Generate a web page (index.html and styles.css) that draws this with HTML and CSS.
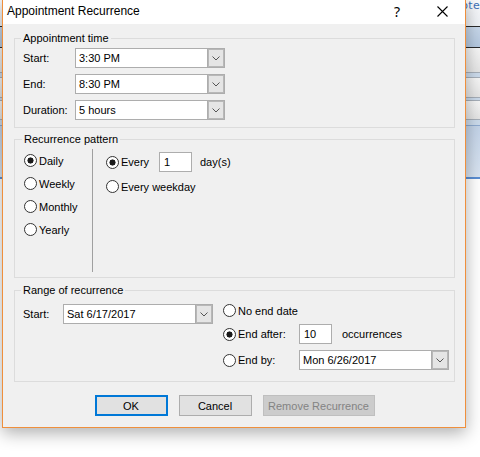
FILE: index.html
```html
<!DOCTYPE html>
<html>
<head>
<meta charset="utf-8">
<link rel="stylesheet" href="styles.css">
</head>
<body>
<div class="desk">
  <div class="app">
    <div class="app-tab"><span class="app-tab-text">ote</span></div>
    <div class="app-line dark"></div>
    <div class="app-band blue"></div>
    <div class="app-line dark"></div>
    <div class="app-band light h24"></div>
    <div class="app-line grey"></div>
    <div class="app-band pale h4"></div>
    <div class="app-line grey"></div>
    <div class="app-band light h19"></div>
    <div class="app-line grey"></div>
    <div class="app-band pale h2"></div>
    <div class="app-line grey"></div>
    <div class="app-band light h18"></div>
    <div class="app-line grey"></div>
    <div class="app-band pale h6"></div>
    <div class="app-line blueline"></div>
    <div class="app-band sky"></div>
    <div class="app-line strong"></div>
    <div class="app-rest"></div>
  </div>

  <div class="dialog">
    <div class="titlebar">
      <span class="title">Appointment Recurrence</span>
      <span class="cap-btn help">?</span>
      <span class="cap-btn close">
        <svg width="11" height="11" viewBox="0 0 11 11"><path d="M0.5 0.5L10.5 10.5M10.5 0.5L0.5 10.5" stroke="#000" stroke-width="1.1" fill="none"/></svg>
      </span>
    </div>

    <div class="content">
      <fieldset class="group g-time">
        <legend>Appointment time</legend>
        <div class="rows">
          <div class="row">
            <span class="lbl w52">Start:</span>
            <div class="combo"><span class="val">3:30 PM</span><span class="drop"><svg width="8" height="5" viewBox="0 0 8 5"><path d="M0.5 0.5L4 4L7.5 0.5" stroke="#555" fill="none"/></svg></span></div>
          </div>
          <div class="row">
            <span class="lbl w52">End:</span>
            <div class="combo"><span class="val">8:30 PM</span><span class="drop"><svg width="8" height="5" viewBox="0 0 8 5"><path d="M0.5 0.5L4 4L7.5 0.5" stroke="#555" fill="none"/></svg></span></div>
          </div>
          <div class="row">
            <span class="lbl w52">Duration:</span>
            <div class="combo"><span class="val">5 hours</span><span class="drop"><svg width="8" height="5" viewBox="0 0 8 5"><path d="M0.5 0.5L4 4L7.5 0.5" stroke="#555" fill="none"/></svg></span></div>
          </div>
        </div>
      </fieldset>

      <fieldset class="group g-pattern">
        <legend>Recurrence pattern</legend>
        <div class="pattern">
          <div class="freq">
            <div class="radio-item"><span class="radio on"></span><span>Daily</span></div>
            <div class="radio-item"><span class="radio"></span><span>Weekly</span></div>
            <div class="radio-item"><span class="radio"></span><span>Monthly</span></div>
            <div class="radio-item"><span class="radio"></span><span>Yearly</span></div>
          </div>
          <div class="sep"></div>
          <div class="detail">
            <div class="radio-item tall"><span class="radio on"></span><span class="w36">Every</span><span class="textbox w33">1</span><span class="after">day(s)</span></div>
            <div class="radio-item"><span class="radio"></span><span>Every weekday</span></div>
          </div>
        </div>
      </fieldset>

      <fieldset class="group g-range">
        <legend>Range of recurrence</legend>
        <div class="range">
          <div class="range-start">
            <span class="lbl w40">Start:</span>
            <div class="combo"><span class="val">Sat 6/17/2017</span><span class="drop"><svg width="8" height="5" viewBox="0 0 8 5"><path d="M0.5 0.5L4 4L7.5 0.5" stroke="#555" fill="none"/></svg></span></div>
          </div>
          <div class="range-end">
            <div class="radio-item"><span class="radio"></span><span>No end date</span></div>
            <div class="radio-item tall"><span class="radio on"></span><span class="w59">End after:</span><span class="textbox w33">10</span><span class="after wide">occurrences</span></div>
            <div class="radio-item tall"><span class="radio"></span><span class="w59">End by:</span><div class="combo"><span class="val">Mon 6/26/2017</span><span class="drop"><svg width="8" height="5" viewBox="0 0 8 5"><path d="M0.5 0.5L4 4L7.5 0.5" stroke="#555" fill="none"/></svg></span></div></div>
          </div>
        </div>
      </fieldset>

      <div class="buttons">
        <span class="btn default">OK</span>
        <span class="btn">Cancel</span>
        <span class="btn disabled">Remove Recurrence</span>
      </div>
    </div>
  </div>
</div>
</body>
</html>
```

FILE: styles.css
```css
html, body {
  margin: 0;
  padding: 0;
}
body {
  width: 480px;
  height: 457px;
  overflow: hidden;
  background: #fff;
  font-family: "Liberation Sans", Arial, sans-serif;
  font-size: 11px;
  color: #000;
}
.desk {
  position: relative;
  width: 480px;
  height: 457px;
  overflow: hidden;
}

/* background application */
.app {
  display: flex;
  flex-direction: column;
  width: 480px;
  height: 457px;
}
.app-tab {
  height: 26px;
  background: linear-gradient(#f7f8fa, #eef1f5);
  display: flex;
  justify-content: flex-end;
  align-items: flex-start;
}
.app-tab-text {
  font-family: "DejaVu Sans", sans-serif;
  font-size: 11px;
  line-height: 12px;
  color: #3d6fb6;
  letter-spacing: 0.3px;
}
.app-line { height: 1px; }
.app-line.dark { background: #2a2a2a; }
.app-line.grey { background: #a6aeb8; }
.app-line.blueline { background: #8eaad0; }
.app-line.strong { height: 2px; background: #5b8ed3; }
.app-band.blue { height: 20px; background: linear-gradient(#c7d7ea, #b4c8df); }
.app-band.light { background: linear-gradient(#f6f6f6, #e4e4e4); }
.app-band.pale { background: #cbdaeb; }
.app-band.sky { height: 51px; background: linear-gradient(#c3d3e8, #d9e4f1); }
.h24 { height: 24px; }
.h19 { height: 19px; }
.h18 { height: 18px; }
.h6 { height: 5px; }
.h4 { height: 4px; }
.h2 { height: 2px; }
.app-rest { flex: 1; background: #fff; }

/* dialog window */
.dialog {
  position: absolute;
  left: 2px;
  top: -1px;
  width: 464px;
  height: 429px;
  box-sizing: border-box;
  border: 1px solid #ef8f3c;
  background: #f0f0f0;
  box-shadow: 0 5px 16px rgba(0, 0, 0, 0.32);
  display: flex;
  flex-direction: column;
}
.titlebar {
  height: 24px;
  background: #fff;
  display: flex;
  align-items: center;
  flex: none;
}
.title {
  font-family: "Liberation Sans", Arial, sans-serif;
  font-size: 12px;
  padding-left: 4px;
  margin-top: -2px;
  flex: 1;
}
.cap-btn {
  width: 46px;
  height: 24px;
  display: flex;
  align-items: center;
  justify-content: center;
}
.help {
  font-family: "Noto Sans", sans-serif;
  font-size: 14px;
  margin-right: -1px;
  margin-top: -2px;
}
.close svg { display: block; margin-top: -1px; }

.content {
  flex: 1;
  display: flex;
  flex-direction: column;
  padding: 0 10px 0 11px;
}

/* groups */
.group {
  margin: 0;
  border: 1px solid #dcdcdc;
  min-inline-size: 0;
}
.group legend {
  padding: 0 2px;
  margin-left: -2px;
  font-size: 11px;
  line-height: 13px;
  height: 13px;
}
.g-time {
  margin-top: 8px;
  padding: 3px 8px 7px 8px;
}
.g-pattern {
  margin-top: 5px;
  padding: 3px 0 5px 9px;
}
.g-range {
  margin-top: 6px;
  padding: 0 0 11px 8px;
}

.rows {
  display: flex;
  flex-direction: column;
  gap: 6px;
}
.row {
  display: flex;
  align-items: center;
  height: 20px;
}
.lbl { flex: none; }
.w52 { width: 52px; }
.w40 { width: 40px; }
.w36 { width: 36px; }
.w59 { width: 59px; }
.w33 { width: 33px; }

.combo {
  width: 150px;
  height: 20px;
  box-sizing: border-box;
  border: 1px solid #adadad;
  background: #fff;
  display: flex;
  align-items: stretch;
  flex: none;
}
.combo .val {
  flex: 1;
  padding-left: 3px;
  display: flex;
  align-items: center;
}
.combo .drop {
  width: 17px;
  box-sizing: border-box;
  border-left: 1px solid #adadad;
  background: #e5e5e5;
  box-shadow: inset 0 0 0 1px #b8b8b8;
  display: flex;
  align-items: center;
  justify-content: center;
}
.combo .drop svg { display: block; margin-top: 1px; }

.textbox {
  height: 20px;
  box-sizing: border-box;
  border: 1px solid #adadad;
  background: #fff;
  display: flex;
  align-items: center;
  padding-left: 4px;
  flex: none;
}

/* radios */
.radio-item {
  display: flex;
  align-items: center;
  height: 17px;
  gap: 2px;
}
.radio-item.tall { height: 20px; }
.radio {
  width: 13px;
  height: 13px;
  box-sizing: border-box;
  border: 1px solid #333;
  border-radius: 50%;
  background: #fff;
  flex: none;
}
.radio.on {
  background: radial-gradient(circle, #1a1a1a 0 2.8px, #fff 3.3px);
}
.after { margin-left: 6px; }
.after.wide { margin-left: 8px; }

/* pattern group */
.pattern {
  display: flex;
  height: 123px;
}
.freq {
  width: 68px;
  padding-top: 3px;
  display: flex;
  flex-direction: column;
  gap: 6px;
}
.sep {
  width: 1px;
  background: #a0a0a0;
}
.detail {
  padding: 3px 0 0 13px;
  display: flex;
  flex-direction: column;
  gap: 6px;
}
.detail .radio-item:last-child { margin-top: 0; }

/* range group */
.range {
  display: flex;
  align-items: flex-start;
}
.range-start {
  display: flex;
  align-items: center;
  margin-top: 7px;
}
.range-end {
  margin-left: 10px;
  padding-top: 5px;
  display: flex;
  flex-direction: column;
  gap: 5px;
}
.range-end .radio-item:last-child { margin-top: 1px; }

/* buttons */
.buttons {
  margin-top: 13px;
  display: flex;
  justify-content: center;
  gap: 11px;
}
.btn {
  height: 21px;
  width: 73px;
  box-sizing: border-box;
  border: 1px solid #adadad;
  background: #e1e1e1;
  display: flex;
  align-items: center;
  justify-content: center;
}
.btn.default {
  border: 2px solid #0078d7;
}
.btn.disabled {
  width: 112px;
  background: #cccccc;
  border-color: #bfbfbf;
  color: #838383;
}
```
